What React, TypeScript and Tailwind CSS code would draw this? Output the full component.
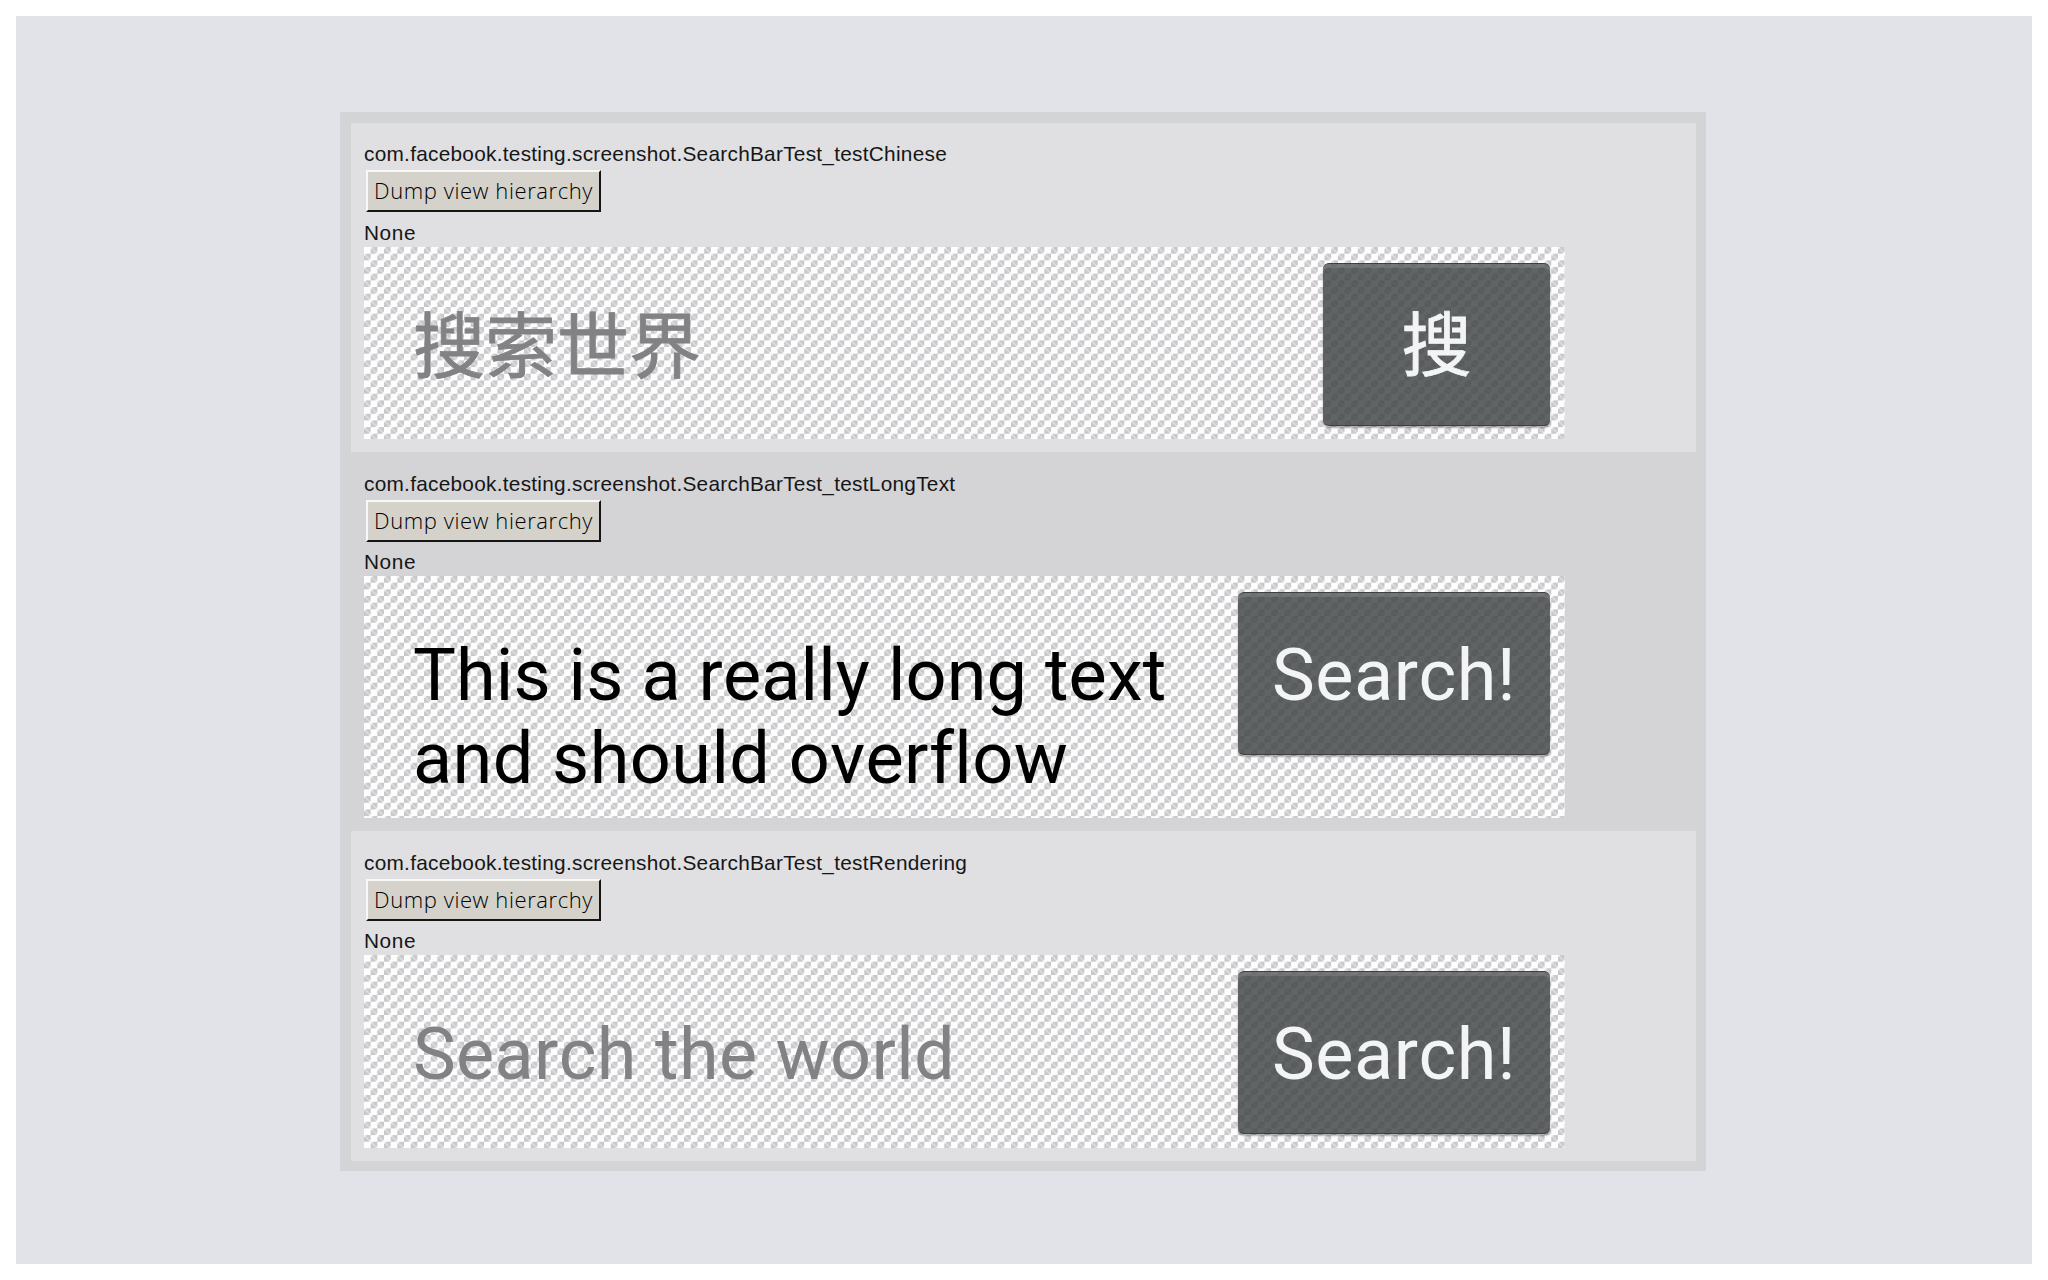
import React from 'react';

interface Line {
  value: string;
  className: string;
}

interface Shot {
  name: string;
  text: Line[];
  action: string;
  hint: boolean;
  rowClass: string;
  noneClass: string;
  previewClass: string;
  textClass: string;
  buttonClass: string;
}

const shots: Shot[] = [
  {
    name: 'com.facebook.testing.screenshot.SearchBarTest_testChinese',
    text: [{ value: '搜索世界', className: '[-webkit-text-stroke:0.8px_#828183]' }],
    action: '搜',
    hint: true,
    rowClass: 'h-[329px] pt-[18px] bg-[#e0dfe1]',
    noneClass: 'h-[35px] pt-[8px]',
    previewClass: 'h-[192px]',
    textClass: 'pt-[59px]',
    buttonClass: 'w-[227px] pt-[6px] text-[70px] [-webkit-text-stroke:0.8px_#f3f4f6]',
  },
  {
    name: 'com.facebook.testing.screenshot.SearchBarTest_testLongText',
    text: [
      { value: 'This is a really long text', className: 'tracking-[0.09px]' },
      { value: 'and should overflow', className: 'tracking-[0.43px]' },
    ],
    action: 'Search!',
    hint: false,
    rowClass: 'h-[379px] pt-[19px] bg-[#d4d3d5]',
    noneClass: 'h-[34px] pt-[7px]',
    previewClass: 'h-[242px]',
    textClass: 'pt-[58px]',
    buttonClass: 'w-[312px] pt-[4px] text-[72px] tracking-[0.5px]',
  },
  {
    name: 'com.facebook.testing.screenshot.SearchBarTest_testRendering',
    text: [{ value: 'Search the world', className: 'tracking-[0.33px]' }],
    action: 'Search!',
    hint: true,
    rowClass: 'h-[330px] pt-[19px] bg-[#e0dfe1]',
    noneClass: 'h-[34px] pt-[7px]',
    previewClass: 'h-[193px]',
    textClass: 'pt-[58px]',
    buttonClass: 'w-[312px] pt-[4px] text-[72px] tracking-[0.5px]',
  },
];

function Checkerboard({ id }: { id: string }) {
  return (
    <svg className="absolute inset-0 h-full w-full" aria-hidden="true">
      <defs>
        <pattern id={id} width="13.34" height="13.34" patternUnits="userSpaceOnUse">
          <rect width="13.34" height="13.34" fill="#fefdfe" />
          <g fill="#c9c8ca">
            <path d="M9 0h4.34v4.4l-1.8 2.27h-4.87V2.2z" />
            <path d="M2.3 6.67h4.37v4.4l-1.8 2.27H0V8.9z" />
          </g>
          <path d="M7.3 .6l5.4 5.4M.6 7.3l5.4 5.4" stroke="#e8e7e9" strokeWidth="1.1" />
        </pattern>
      </defs>
      <rect width="100%" height="100%" fill={`url(#${id})`} />
    </svg>
  );
}

function ShotRow({ shot, id }: { shot: Shot; id: string }) {
  return (
    <div className={`px-[13px] ${shot.rowClass}`}>
      <div className="h-[29px] text-[20.8px] leading-[26px] tracking-[0.27px] whitespace-nowrap">
        {shot.name}
      </div>
      <button className="ml-[2px] flex h-[42px] w-[235px] items-center justify-center border-2 border-t-[#f8f8f5] border-r-[#151515] border-b-[#151515] border-l-[#f8f8f5] bg-[#d4d2ca] pb-px font-['Open_Sans'] text-[22px] font-light tracking-[0.58px] whitespace-nowrap text-black">
        Dump view hierarchy
      </button>
      <div className={`text-[20.8px] leading-[26px] tracking-[0.6px] ${shot.noneClass}`}>None</div>
      <div
        className={`relative flex w-[1201px] justify-between overflow-hidden pr-[15px] pl-[49px] font-[Roboto,'Noto_Sans_CJK_SC',sans-serif] [font-kerning:none] [font-variant-ligatures:none] ${shot.previewClass}`}
      >
        <Checkerboard id={id} />
        <div
          className={`relative text-[72px] leading-[83px] whitespace-nowrap ${shot.textClass} ${shot.hint ? 'text-[#828183]' : 'text-black'}`}
        >
          {shot.text.map((line) => (
            <div key={line.value} className={line.className}>
              {line.value}
            </div>
          ))}
        </div>
        <div
          className={`relative mt-[16px] flex h-[163px] items-center justify-center rounded-[6px] border-y border-[#3e4041] bg-[#434647]/84 text-[#f3f4f6] shadow-[0_2px_2px_rgba(0,0,0,0.3),inset_0_4px_1px_rgba(255,255,255,0.12)] ${shot.buttonClass}`}
        >
          {shot.action}
        </div>
      </div>
    </div>
  );
}

export default function App() {
  return (
    <div className="h-[1280px] w-[2048px] bg-white p-4 font-['Liberation_Sans',sans-serif] text-[#151617]">
      <div className="h-[1248px] bg-[#e2e3e8] pt-[96px] pl-[324px]">
        <div className="h-[1059px] w-[1366px] bg-[#d3d4d5] pt-[11px] pr-[10px] pl-[11px]">
          {shots.map((shot, index) => (
            <ShotRow key={shot.name} shot={shot} id={`checker-${index}`} />
          ))}
        </div>
      </div>
    </div>
  );
}
